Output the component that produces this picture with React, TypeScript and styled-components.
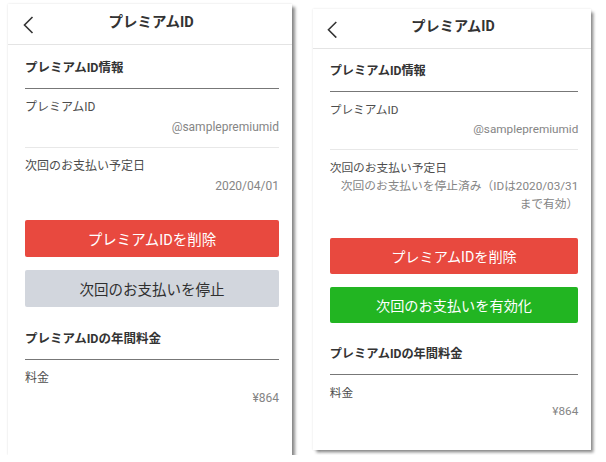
import React from "react";
import styled, { createGlobalStyle } from "styled-components";

const GlobalStyle = createGlobalStyle`
  html, body {
    margin: 0;
    padding: 0;
    background: #ffffff;
  }
  body {
    font-family: Roboto, "Noto Sans CJK JP", sans-serif;
    -webkit-font-smoothing: antialiased;
  }
`;

const Page = styled.div`
  display: flex;
  align-items: flex-start;
  gap: 21px;
  padding: 4px 0 0 8px;
`;

const Phone = styled.div<{ $zoom: number; $offset: number }>`
  zoom: ${(p) => p.$zoom};
  margin-top: ${(p) => p.$offset}px;
  width: 284px;
  height: 451px;
  background: #ffffff;
  box-shadow: 3px 3px 3px rgba(0, 0, 0, 0.45), 0 0 2px rgba(0, 0, 0, 0.12);
  display: flex;
  flex-direction: column;
`;

const Header = styled.div`
  position: relative;
  height: 40px;
  border-bottom: 1px solid #e4e4e4;
  display: flex;
  align-items: center;
  justify-content: center;
`;

const Back = styled.button`
  position: absolute;
  left: 13px;
  top: 11px;
  width: 14px;
  height: 20px;
  padding: 0;
  border: none;
  background: none;
  display: flex;
  align-items: center;
  justify-content: center;
`;

const Title = styled.h1`
  margin: 0 0 3px 2px;
  font-size: 14.5px;
  font-weight: 700;
  color: #333333;
  line-height: 20px;
`;

const Body = styled.div`
  padding: 0 13px 0 17px;
  display: flex;
  flex-direction: column;
`;

const SectionTitle = styled.h2`
  margin: 0;
  padding: 14px 0 11px;
  font-size: 12.5px;
  font-weight: 700;
  line-height: 18px;
  color: #333333;
  border-bottom: 1.5px solid #777777;
`;

const Row = styled.div<{ $divider?: boolean }>`
  padding: ${(p) => (p.$divider ? "10px 0 11px" : "10px 0 0")};
  border-bottom: ${(p) => (p.$divider ? "1px solid #e8e8e8" : "none")};
  display: flex;
  flex-direction: column;
`;

const Label = styled.div`
  font-size: 12px;
  line-height: 17px;
  color: #4d4d4d;
`;

const Value = styled.div`
  margin-top: 2px;
  font-size: 12px;
  line-height: 18px;
  color: #858585;
  text-align: right;
`;

const Buttons = styled.div`
  margin: 25px 0 9px;
  display: flex;
  flex-direction: column;
  gap: 13px;
`;

const palette = {
  danger: { bg: "#e8493f", fg: "#ffffff" },
  muted: { bg: "#d2d6dd", fg: "#2f2f2f" },
  success: { bg: "#22b522", fg: "#ffffff" },
};

const ActionButton = styled.button<{ $variant: keyof typeof palette }>`
  height: 37px;
  border: none;
  border-radius: 2px;
  background: ${(p) => palette[p.$variant].bg};
  color: ${(p) => palette[p.$variant].fg};
  font-family: inherit;
  font-size: 14.5px;
  font-weight: 400;
  padding: 0;
  cursor: pointer;
`;

const Chevron = () => (
  <svg width="11" height="18" viewBox="0 0 11 18" fill="none">
    <polyline
      points="9.5,1 1.5,9 9.5,17"
      stroke="#333333"
      strokeWidth="1.6"
      strokeLinejoin="miter"
    />
  </svg>
);

type ScreenProps = {
  zoom: number;
  offset: number;
  stopped: boolean;
};

const Screen = ({ zoom, offset, stopped }: ScreenProps) => (
  <Phone $zoom={zoom} $offset={offset}>
    <Header>
      <Back aria-label="戻る">
        <Chevron />
      </Back>
      <Title>プレミアムID</Title>
    </Header>
    <Body>
      <SectionTitle>プレミアムID情報</SectionTitle>
      <Row $divider>
        <Label>プレミアムID</Label>
        <Value>@samplepremiumid</Value>
      </Row>
      <Row>
        <Label>次回のお支払い予定日</Label>
        {stopped ? (
          <Value>
            次回のお支払いを停止済み（IDは2020/03/31
            <br />
            まで有効）
          </Value>
        ) : (
          <Value>2020/04/01</Value>
        )}
      </Row>
      <Buttons>
        <ActionButton $variant="danger">プレミアムIDを削除</ActionButton>
        {stopped ? (
          <ActionButton $variant="success">次回のお支払いを有効化</ActionButton>
        ) : (
          <ActionButton $variant="muted">次回のお支払いを停止</ActionButton>
        )}
      </Buttons>
      <SectionTitle>プレミアムIDの年間料金</SectionTitle>
      <Row>
        <Label>料金</Label>
        <Value>¥864</Value>
      </Row>
    </Body>
  </Phone>
);

export default function App() {
  return (
    <>
      <GlobalStyle />
      <Page>
        <Screen zoom={1} offset={0} stopped={false} />
        <Screen zoom={0.979} offset={5} stopped />
      </Page>
    </>
  );
}
